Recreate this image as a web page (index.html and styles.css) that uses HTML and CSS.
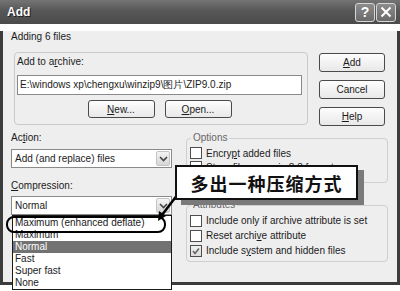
FILE: index.html
```html
<!DOCTYPE html>
<html>
<head>
<meta charset="utf-8">
<link rel="stylesheet" href="styles.css">
</head>
<body>
<div class="window">
  <div class="titlebar">
    <span class="title">Add</span>
    <div class="tb-btns">
      <span class="tb-btn">?</span>
      <span class="tb-btn"><svg width="12" height="12" viewBox="0 0 12 12"><path d="M1.5 1.5 L10.5 10.5 M10.5 1.5 L1.5 10.5" stroke="#fff" stroke-width="2"/></svg></span>
    </div>
  </div>
  <div class="body">
    <div class="adding">Adding 6 files</div>
    <div class="row1">
      <div class="archive">
        <div class="lbl">Add to a<u>r</u>chive:</div>
        <div class="input">E:\windows xp\chengxu\winzip9\图片\ZIP9.0.zip</div>
        <div class="arch-btns">
          <span class="btn small"><u>N</u>ew...</span>
          <span class="btn small"><u>O</u>pen...</span>
        </div>
      </div>
      <div class="btncol">
        <span class="btn"><u>A</u>dd</span>
        <span class="btn">Cancel</span>
        <span class="btn"><u>H</u>elp</span>
      </div>
    </div>
    <div class="row2">
      <div class="leftcol">
        <div class="lbl">Ac<u>t</u>ion:</div>
        <div class="combo"><span>Add (and replace) files</span><span class="chev"><svg width="9" height="6" viewBox="0 0 9 6"><polyline points="1,1 4.5,4.5 8,1" fill="none" stroke="#444" stroke-width="1.6"/></svg></span></div>
        <div class="lbl comp"><u>C</u>ompression:</div>
        <div class="combo"><span>Normal</span><span class="chev"><svg width="9" height="6" viewBox="0 0 9 6"><polyline points="1,1 4.5,4.5 8,1" fill="none" stroke="#444" stroke-width="1.6"/></svg></span></div>
      </div>
      <div class="rightcol">
        <fieldset class="grp options">
          <legend>Options</legend>
          <div class="chk"><span class="box"></span><span>Encry<u>p</u>t added files</span></div>
          <div class="chk"><span class="box"></span><span>Store filenames in 8.3 format</span></div>
        </fieldset>
        <fieldset class="grp attrs">
          <legend>Attributes</legend>
          <div class="chk"><span class="box"></span><span>Include only if archive attribute is set</span></div>
          <div class="chk"><span class="box"></span><span>Reset archi<u>v</u>e attribute</span></div>
          <div class="chk"><span class="box checked"><svg width="10" height="10" viewBox="0 0 10 10"><polyline points="2,5 4,7.5 8,2.5" fill="none" stroke="#666" stroke-width="1.6"/></svg></span><span>Include s<u>y</u>stem and hidden files</span></div>
        </fieldset>
      </div>
    </div>
  </div>
  <ul class="droplist">
    <li>Maximum (enhanced deflate)</li>
    <li>Maximum</li>
    <li class="sel">Normal</li>
    <li>Fast</li>
    <li>Super fast</li>
    <li>None</li>
  </ul>
  <div class="oval"></div>
  <svg class="arrow" width="400" height="291" viewBox="0 0 400 291">
    <path d="M178 194 L162 215" stroke="#000" stroke-width="2.5" fill="none"/>
    <polygon points="158,221 166,216 159,211" fill="#000"/>
  </svg>
  <div class="callout">多出一种压缩方式</div>
</div>
</body>
</html>
```
FILE: styles.css
```css
* { box-sizing: border-box; }
html, body { margin: 0; padding: 0; background: #fff; }
body {
  width: 400px; height: 291px; overflow: hidden;
  font-family: "Liberation Sans", Arial, sans-serif;
  font-size: 10px; color: #1b1b1b;
}
.window { position: relative; width: 400px; height: 278px; }
.titlebar {
  height: 24px;
  background: linear-gradient(#747474, #575757 45%, #4b4b4b);
  display: flex; align-items: center; justify-content: space-between;
  padding: 0 4px 0 7px;
}
.title {
  color: #fff; font-weight: bold; font-size: 12px;
  text-shadow: 1px 1px 0 #1e1e1e;
}
.tb-btns { display: flex; gap: 1px; }
.tb-btn {
  width: 20px; height: 19px;
  border: 1px solid #d6d6d6; border-radius: 3px;
  background: linear-gradient(#8c8c8c, #6a6a6a);
  color: #fff; font-weight: bold; font-size: 14px;
  display: flex; align-items: center; justify-content: center;
}
.body {
  height: 254px;
  background: #eeeeee;
  border: 3px solid #3c3c3c; border-top: 0;
  padding-left: 8px;
}
.adding { margin-top: 7px; line-height: 12px; }
.row1 { display: flex; margin-top: 9px; height: 74px; }
.archive {
  margin-left: 3px; width: 294px; height: 73px;
  border: 1px solid #c9c9c9; border-radius: 4px;
  padding: 3px 5px 0 2px;
}
.lbl { line-height: 12px; }
.input {
  margin-top: 7px; height: 20px;
  background: #fff; border: 1px solid #8a8a8a;
  line-height: 18px; padding-left: 2px;
  white-space: nowrap; overflow: hidden;
}
.arch-btns { display: flex; justify-content: center; gap: 10px; margin-top: 5px; }
.btn {
  display: flex; align-items: center; justify-content: center;
  width: 66px; height: 19px;
  border: 1px solid #4a4a4a; border-radius: 3px;
  background: linear-gradient(#fdfdfd, #e8e8e8);
}
.btn.small { width: 67px; height: 18px; }
.btncol {
  display: flex; flex-direction: column; gap: 8px;
  margin-left: 11px; padding-top: 1px;
}
.row2 { display: flex; margin-top: 6px; }
.leftcol { width: 161px; }
.combo {
  height: 19px; margin-top: 5px;
  background: #fff; border: 1px solid #8a8a8a;
  display: flex; align-items: center; justify-content: space-between;
  padding-left: 3px; padding-right: 1px;
}
.lbl.comp { margin-top: 12px; }
.lbl.comp + .combo { margin-top: 4px; }
.chev {
  width: 14px; height: 15px;
  background: linear-gradient(#f4f4f4, #d6d6d6);
  border: 1px solid #c4c4c4; border-radius: 2px;
  display: flex; align-items: center; justify-content: center;
}
.rightcol { margin-left: 14px; width: 202px; }
.grp {
  margin: 0; padding: 0 3px;
  border: 1px solid #cfcfcf; border-radius: 4px;
  min-width: 0;
}
.grp legend { padding: 0 2px; margin-left: 1px; color: #666; line-height: 12px; }
.options { padding-top: 2px; padding-bottom: 8px; }
.options .chk { height: 14px; }
.attrs { margin-top: 16px; padding-top: 2px; padding-bottom: 3px; }
.chk { display: flex; align-items: center; height: 15px; gap: 4px; white-space: nowrap; }
.box {
  width: 12px; height: 12px; flex: none;
  border: 1px solid #4e4e4e; background: #fff;
  display: flex; align-items: center; justify-content: center;
}
.box.checked { background: linear-gradient(#f0f0f0, #dcdcdc); }
.droplist {
  position: absolute; left: 12px; top: 215px;
  width: 160px; height: 75px;
  margin: 0; padding: 1px 0 0 0; list-style: none;
  background: #fff; border: 1px solid #1a1a1a;
}
.droplist li { line-height: 12px; padding-left: 2px; }
.droplist li.sel { background: #727272; color: #fff; }
.oval {
  position: absolute; left: 6px; top: 216px;
  width: 160px; height: 17px;
  border: 2.5px solid #000; border-radius: 8px;
}
.arrow { position: absolute; left: 0; top: 0; }
.callout {
  position: absolute; left: 175px; top: 165px;
  width: 183px; height: 35px;
  border: 2px solid #111; background: #fff;
  box-shadow: 6px 5px 0 #7a7a7a;
  display: flex; align-items: center; justify-content: center;
  font-family: "Noto Sans CJK SC", sans-serif;
  font-size: 18px; font-weight: bold; letter-spacing: 1px; color: #111;
}
```
